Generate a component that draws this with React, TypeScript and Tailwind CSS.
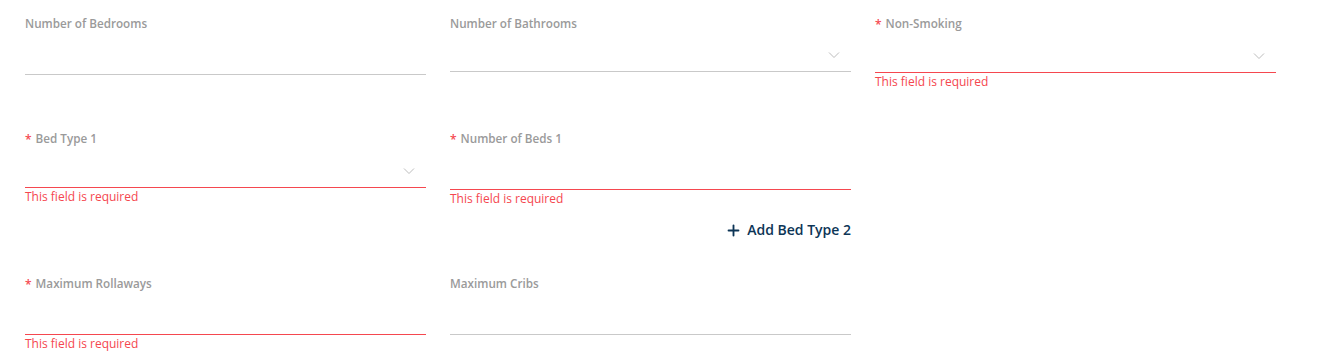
import { Plus } from 'lucide-react';

type FieldProps = {
  label: string;
  required?: boolean;
  select?: boolean;
  error?: boolean;
  area: string;
};

const Chevron = () => (
  <svg
    className="absolute right-[11px] bottom-[12px]"
    width="12"
    height="8"
    viewBox="0 0 12 8"
    fill="none"
  >
    <path d="M1 1.5 L6 6.5 L11 1.5" stroke="#bdbdbd" strokeWidth="1" />
  </svg>
);

const Field = ({ label, required, select, error, area }: FieldProps) => {
  return (
    <div className="flex flex-col">
      <div className="flex h-[17px] items-center pt-px text-[11.7px] font-semibold leading-4 text-[#9a9a9a]">
        {required && (
          <span className="mr-[4px] mt-[3px] text-[12px] font-semibold leading-none text-[#f5474f]">*</span>
        )}
        <span>{label}</span>
      </div>
      <div
        className={`relative border-b ${area} ${error ? 'border-[#f5474f]' : 'border-[#c9c9c9]'}`}
      >
        {select && <Chevron />}
      </div>
      {error && (
        <div className="pt-px text-[12px] leading-4 text-[#f5474f]">This field is required</div>
      )}
    </div>
  );
};

export default function App() {
  return (
    <div
      className="h-[361px] w-[1327px] overflow-hidden bg-white pl-[25px] pt-[14px]"
      style={{ fontFamily: '"Open Sans", "Noto Sans", sans-serif' }}
    >
      <div className="grid h-[115px] grid-cols-[401px_401px_401px] items-start gap-x-[24px]">
        <Field label="Number of Bedrooms" area="h-[44px]" />
        <Field label="Number of Bathrooms" select area="h-[41px]" />
        <Field label="Non-Smoking" required select error area="h-[42px]" />
      </div>

      <div className="grid h-[145px] grid-cols-[401px_401px_401px] items-start gap-x-[24px]">
        <Field label="Bed Type 1" required select error area="h-[42px]" />
        <div className="flex flex-col">
          <Field label="Number of Beds 1" required error area="h-[44px]" />
          <button className="mt-[13px] flex items-center justify-end gap-[5px] self-end text-[14px] font-semibold leading-5 text-[#0d3556]">
            <Plus className="h-[17px] w-[17px]" strokeWidth={2.6} />
            <span>Add Bed Type 2</span>
          </button>
        </div>
        <div />
      </div>

      <div className="grid grid-cols-[401px_401px_401px] items-start gap-x-[24px]">
        <Field label="Maximum Rollaways" required error area="h-[44px]" />
        <Field label="Maximum Cribs" area="h-[44px]" />
        <div />
      </div>
    </div>
  );
}
